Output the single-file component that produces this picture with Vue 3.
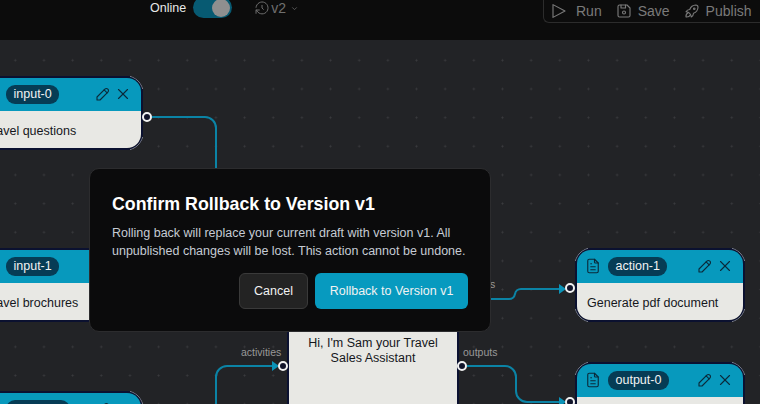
<script setup>
const nodes = [
  { id: 'input-0', label: 'input-0', left: -60, top: 36, width: 203, body: 'Get travel questions', icon: false, pad: 64, bodyPad: 23 },
  { id: 'input-1', label: 'input-1', left: -60, top: 208, width: 203, body: 'Get travel brochures', icon: false, pad: 64, bodyPad: 23 },
  { id: 'clipped', label: '', left: -60, top: 351, width: 203, body: '', icon: false, pad: 64, bodyPad: 23 },
  { id: 'action-1', label: 'action-1', left: 575, top: 208, width: 170, body: 'Generate pdf document', icon: true, pad: 7, bodyPad: 10 },
  { id: 'output-0', label: 'output-0', left: 575, top: 322, width: 170, body: '', icon: true, pad: 7, bodyPad: 10 }
]

const handles = [
  { x: 147, y: 77 },
  { x: 283, y: 326 },
  { x: 462, y: 326 },
  { x: 570, y: 248 },
  { x: 570, y: 362 }
]
</script>

<template>
  <div class="page">
    <header class="topbar">
      <div class="status">
        <span class="online">Online</span>
        <span class="toggle"><span class="knob"></span></span>
      </div>
      <div class="version">
        <svg class="icon history" viewBox="0 0 24 24"><path d="M12 8l0 4l2 2" /><path d="M3.05 11a9 9 0 1 1 .5 4m-.5 5v-5h5" /></svg>
        <span>v2</span>
        <svg class="chevron" viewBox="0 0 24 24"><path d="M6 9l6 6l6 -6" /></svg>
      </div>
      <div class="actions">
        <span class="action">
          <svg class="icon play" viewBox="0 0 24 24"><path d="M4 3.5v17l16 -8.5z" /></svg>
          Run
        </span>
        <span class="action">
          <svg class="icon" viewBox="0 0 24 24"><path d="M6 4h10l4 4v10a2 2 0 0 1 -2 2h-12a2 2 0 0 1 -2 -2v-12a2 2 0 0 1 2 -2" /><circle cx="12" cy="14" r="2" /><path d="M14 4l0 4l-6 0l0 -4" /></svg>
          Save
        </span>
        <span class="action">
          <svg class="icon" viewBox="0 0 24 24"><path d="M4 13a8 8 0 0 1 7 7a6 6 0 0 0 3 -5a9 9 0 0 0 6 -8a3 3 0 0 0 -3 -3a9 9 0 0 0 -8 6a6 6 0 0 0 -5 3" /><path d="M7 14a6 6 0 0 0 -3 6a6 6 0 0 0 6 -3" /><circle cx="15" cy="9" r="1" /></svg>
          Publish
        </span>
      </div>
    </header>

    <main class="canvas">
      <svg class="edges" viewBox="0 40 760 364">
        <path d="M152 117H205a11 11 0 0 1 11 11V170" />
        <path d="M216 404V377a11 11 0 0 1 11 -11H273" />
        <path d="M467 366H505a11 11 0 0 1 11 11V391a11 11 0 0 0 11 11H560" />
        <path d="M490 299H509a6 6 0 0 0 6 -5V294a6 6 0 0 1 6 -5H560" />
        <polygon points="272,361 279,366 272,371" />
        <polygon points="559,284 566,289 559,294" />
        <polygon points="559,397 566,402 559,407" />
      </svg>

      <span class="edge-label activities">activities</span>
      <span class="edge-label outputs">outputs</span>
      <span class="edge-label tail">s</span>

      <div class="assistant">
        <p>Hi, I'm Sam your Travel Sales Assistant</p>
      </div>

      <div
        v-for="node in nodes"
        :key="node.id"
        class="node"
        :style="{ left: node.left + 'px', top: node.top + 'px', width: node.width + 'px' }"
      >
        <div class="node-head" :style="{ paddingLeft: node.pad + 'px' }">
          <svg v-if="node.icon" class="doc" viewBox="0 0 24 24"><path d="M14 3v4a1 1 0 0 0 1 1h4" /><path d="M17 21h-10a2 2 0 0 1 -2 -2v-14a2 2 0 0 1 2 -2h7l5 5v11a2 2 0 0 1 -2 2z" /><path d="M9 9l1 0" /><path d="M9 13l6 0" /><path d="M9 17l6 0" /></svg>
          <span class="pill" :class="{ blank: !node.label }">{{ node.label }}</span>
          <svg class="tool pencil" viewBox="0 0 24 24"><path d="M4 20h4l10.5 -10.5a2.828 2.828 0 1 0 -4 -4l-10.5 10.5v4" /><path d="M13.5 6.5l4 4" /></svg>
          <svg class="tool" viewBox="0 0 24 24"><path d="M18 6l-12 12" /><path d="M6 6l12 12" /></svg>
        </div>
        <div class="node-body" :style="{ paddingLeft: node.bodyPad + 'px' }">{{ node.body }}</div>
      </div>

      <span
        v-for="(h, i) in handles"
        :key="i"
        class="handle"
        :style="{ left: h.x + 'px', top: h.y + 'px' }"
      ></span>

      <div class="modal">
        <h2>Confirm Rollback to Version v1</h2>
        <p>Rolling back will replace your current draft with version v1. All unpublished changes will be lost. This action cannot be undone.</p>
        <div class="modal-actions">
          <button class="btn cancel">Cancel</button>
          <button class="btn confirm">Rollback to Version v1</button>
        </div>
      </div>
    </main>
  </div>
</template>

<style>
html, body {
  margin: 0;
  background: #0c0c0c;
}
</style>

<style scoped>
.page {
  width: 760px;
  height: 404px;
  overflow: hidden;
  font-family: "Liberation Sans", Arial, sans-serif;
  display: flex;
  flex-direction: column;
}

.topbar {
  height: 40px;
  flex: none;
  background: #0c0c0c;
  display: flex;
  align-items: flex-start;
  padding-left: 150px;
}

.status {
  display: flex;
  align-items: center;
  gap: 7px;
  margin-top: -3px;
}

.online {
  font-size: 12.5px;
  color: #e8e8e8;
}

.toggle {
  width: 39px;
  height: 21px;
  border-radius: 11px;
  background: #075a72;
  display: flex;
  align-items: center;
  justify-content: flex-end;
  padding-right: 2px;
  box-sizing: border-box;
}

.knob {
  width: 18px;
  height: 18px;
  border-radius: 50%;
  background: #8f8f8f;
}

.version {
  display: flex;
  align-items: center;
  gap: 1px;
  margin: -1px 0 0 22px;
  color: #6f6f6f;
  font-size: 14px;
  height: 18px;
}

.icon {
  width: 18px;
  height: 18px;
  flex: none;
  fill: none;
  stroke: currentColor;
  stroke-width: 1.5;
  stroke-linecap: round;
  stroke-linejoin: round;
}

.history {
  width: 16px;
  height: 16px;
}

.play {
  margin-right: 3px;
}

.chevron {
  width: 9px;
  height: 9px;
  margin-left: 3px;
  fill: none;
  stroke: currentColor;
  stroke-width: 2;
}

.actions {
  margin-left: auto;
  width: 217px;
  height: 24px;
  margin-top: -1px;
  box-sizing: border-box;
  border: 1px solid #2c2c2c;
  border-top: none;
  border-right: none;
  border-bottom-left-radius: 6px;
  display: flex;
  align-items: center;
  gap: 13px;
  padding-left: 6px;
  color: #7a7a7a;
  font-size: 14px;
}

.action {
  display: flex;
  align-items: center;
  gap: 5px;
  white-space: nowrap;
}

.canvas {
  position: relative;
  flex: 1;
  background-color: #222326;
  background-image: radial-gradient(circle, #3a3b3e 0.9px, transparent 1.1px);
  background-size: 28.67px 28.67px;
  background-position: 1px 6px;
  overflow: hidden;
}

.edges {
  position: absolute;
  inset: 0;
  width: 760px;
  height: 364px;
}

.edges path {
  fill: none;
  stroke: #0b83a5;
  stroke-width: 2;
}

.edges polygon {
  fill: #0b93b8;
}

.edge-label {
  position: absolute;
  font-size: 10.5px;
  color: #999;
}

.activities { left: 241px; top: 306px; }
.outputs { left: 463px; top: 306px; }
.tail { left: 490px; top: 238px; }

.assistant {
  position: absolute;
  left: 287px;
  top: 260px;
  width: 172px;
  height: 130px;
  box-sizing: border-box;
  background: #e8e8e4;
  border: 2px solid #0b1130;
  color: #15171c;
  font-size: 12.5px;
  line-height: 15px;
  text-align: center;
  padding: 34px 8px 0;
}

.assistant p {
  margin: 0;
}

.node {
  position: absolute;
  box-sizing: border-box;
  border: 2px solid #0b1130;
  border-radius: 16px;
}

.node::after {
  content: "";
  position: absolute;
  inset: -3px;
  border: 1px solid #7d808a;
  border-radius: 19px;
  -webkit-mask:
    linear-gradient(#000, #000) 0 0 / 14px 14px no-repeat,
    linear-gradient(#000, #000) 100% 0 / 14px 14px no-repeat,
    linear-gradient(#000, #000) 0 100% / 14px 14px no-repeat,
    linear-gradient(#000, #000) 100% 100% / 14px 14px no-repeat;
  mask:
    linear-gradient(#000, #000) 0 0 / 14px 14px no-repeat,
    linear-gradient(#000, #000) 100% 0 / 14px 14px no-repeat,
    linear-gradient(#000, #000) 0 100% / 14px 14px no-repeat,
    linear-gradient(#000, #000) 100% 100% / 14px 14px no-repeat;
}

.node-head {
  height: 33px;
  box-sizing: border-box;
  background: #0799bd;
  border-radius: 14px 14px 0 0;
  display: flex;
  align-items: center;
  padding-right: 9px;
  padding-bottom: 1px;
}

.node-body {
  height: 37px;
  box-sizing: border-box;
  background: #e8e8e4;
  border-radius: 0 0 14px 14px;
  color: #15171c;
  font-size: 12.5px;
  line-height: 40px;
  white-space: nowrap;
  overflow: hidden;
}

.doc {
  width: 18px;
  height: 18px;
  margin-right: 6px;
  fill: none;
  stroke: #0b2a3a;
  stroke-width: 1.5;
  stroke-linecap: round;
  stroke-linejoin: round;
}

.pill {
  background: #063c55;
  color: #f2f2f2;
  font-size: 12.5px;
  height: 19px;
  line-height: 19px;
  border-radius: 9px;
  padding: 0 7.5px;
}

.pill.blank {
  width: 64px;
  padding: 0;
}

.tool {
  width: 18px;
  height: 18px;
  margin-left: 2px;
  fill: none;
  stroke: #0b2a3a;
  stroke-width: 1.5;
  stroke-linecap: round;
  stroke-linejoin: round;
}

.pencil {
  margin-left: auto;
}

.handle {
  position: absolute;
  width: 10px;
  height: 10px;
  box-sizing: border-box;
  border: 2.5px solid #f2f2f2;
  border-radius: 50%;
  background: #12142a;
  transform: translate(-50%, -50%);
}

.modal {
  position: absolute;
  left: 89px;
  top: 128px;
  width: 402px;
  height: 164px;
  box-sizing: border-box;
  background: #0b0b0c;
  border: 1px solid #2c2c2e;
  border-radius: 10px;
  padding: 23px 22px 22px;
  display: flex;
  flex-direction: column;
}

.modal h2 {
  margin: 0;
  font-size: 17.8px;
  line-height: 24px;
  color: #fff;
}

.modal p {
  margin: 8px 0 0;
  font-size: 12.5px;
  line-height: 18px;
  color: #c6cbd4;
}

.modal-actions {
  margin-top: auto;
  display: flex;
  justify-content: flex-end;
  gap: 7px;
}

.btn {
  height: 36px;
  box-sizing: border-box;
  border-radius: 6px;
  font-family: inherit;
  font-size: 12.5px;
  color: #f2f2f2;
}

.cancel {
  width: 69px;
  background: #232323;
  border: 1px solid #3a3a3a;
}

.confirm {
  width: 153px;
  background: #079abf;
  border: none;
}
</style>
